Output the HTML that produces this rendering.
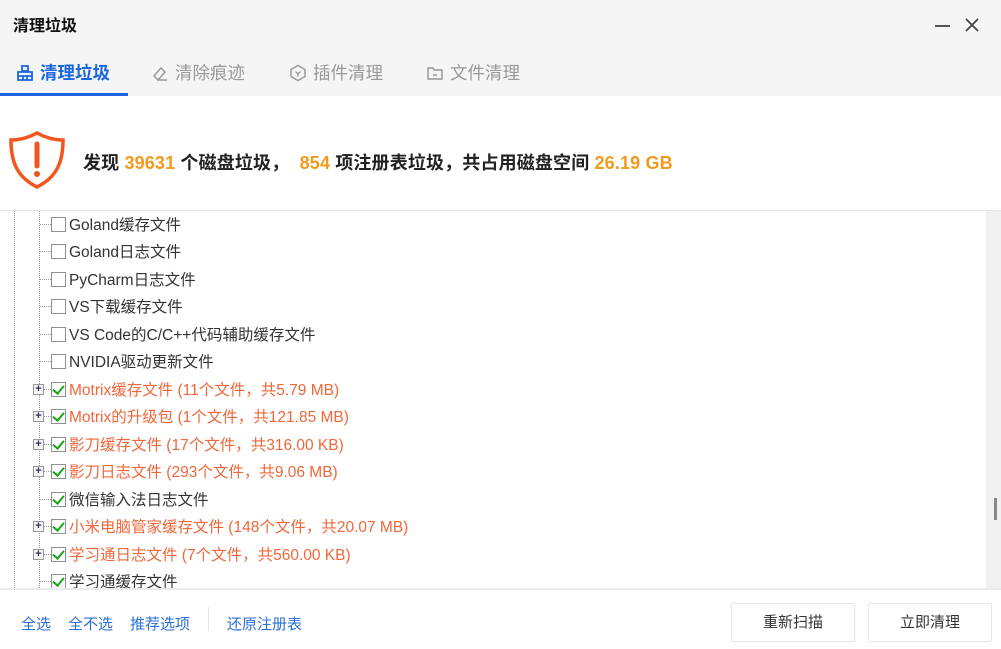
<!DOCTYPE html>
<html><head><meta charset="utf-8"><style>
*{margin:0;padding:0;box-sizing:border-box}
body{width:1001px;height:649px;overflow:hidden;background:#fff;font-family:"Liberation Sans","Noto Sans CJK SC",sans-serif;position:relative}
.top{position:absolute;left:0;top:0;width:1001px;height:96px;background:#f5f5f5}
.title{position:absolute;left:13px;top:12px;font-size:16px;font-weight:bold;color:#111}
.tab{position:absolute;top:60px;font-size:17.5px;color:#999;display:flex;align-items:center;gap:6px}
.tab.act{color:#1a66e0;font-weight:bold}
.ul{position:absolute;left:0;top:93px;width:128px;height:3px;background:#1a66e0}
.hdr{position:absolute;left:83px;top:149px;font-size:18px;letter-spacing:0.15px;font-weight:bold;color:#222;white-space:nowrap}
.hdr b{color:#f39a1d}
.sep{position:absolute;left:0;top:210px;width:1001px;height:1px;background:#e3e6ea}
.list{position:absolute;left:0;top:211px;width:986px;height:377px;overflow:hidden}
.sb{position:absolute;left:986px;top:211px;width:15px;height:377px;background:#f0f0f0}
.thumb{position:absolute;left:994px;top:498px;width:3px;height:22px;background:#888}
.vl{position:absolute;top:0;height:377px;border-left:1px dotted #999}
.row{position:absolute;left:0;height:22px;font-size:15.5px;color:#333;white-space:nowrap}
.row .h{position:absolute;left:40px;top:11px;width:11px;border-top:1px dotted #999}
.cb{position:absolute;left:51px;top:4px;width:15px;height:15px;border:1px solid #8e8f8f;background:#fff}
.cb.c::after{content:"";position:absolute;left:3px;top:0px;width:5px;height:9px;border:solid #1aa51a;border-width:0 2px 2px 0;transform:rotate(40deg)}
.pl{position:absolute;left:33px;top:6px;width:11px;height:11px;border:1px solid #999;background:#f4f4f4;font-size:11px;line-height:9px;text-align:center;color:#335;font-weight:bold}
.row .t{position:absolute;left:69px;top:0px}
.row.o{color:#f0673a}
.foot{position:absolute;left:0;top:588px;width:1001px;height:2px;background:#e8ebef}
.lk{position:absolute;top:613px;font-size:15px;color:#2a6fd6}
.btn{position:absolute;top:603px;width:124px;height:39px;border:1px solid #e4e6ea;border-radius:2px;font-size:15px;color:#333;text-align:center;line-height:37px;background:#fff}
</style></head><body>
<div class="top">
<div class="title">清理垃圾</div>
<div style="position:absolute;left:935px;top:25px;width:15px;height:2px;background:#555"></div>
<svg style="position:absolute;left:965px;top:18px" width="14" height="14"><path d="M1 1L13 13M13 1L1 13" stroke="#444" stroke-width="1.8"/></svg>
<div class="tab act" style="left:16px"><svg width="18" height="18" viewBox="0 0 18 18"><path d="M6 2h6v5H6zM2 8h14v8H2zM2 12h14M7 12v4M11 12v4" fill="none" stroke="#1a66e0" stroke-width="1.8"/></svg>清理垃圾</div>
<div class="tab" style="left:151px"><svg width="18" height="18" viewBox="0 0 18 18"><path d="M3 12l7-8 4 4-7 8zM6 16h10" fill="none" stroke="#999" stroke-width="1.5"/></svg>清除痕迹</div>
<div class="tab" style="left:289px"><svg width="18" height="18" viewBox="0 0 18 18"><path d="M9 1.5l7 4v7l-7 4-7-4v-7z" fill="none" stroke="#999" stroke-width="1.5"/><path d="M6.5 7.5L9 10l2.5-2.5M9 10v3" fill="none" stroke="#999" stroke-width="1.3"/></svg>插件清理</div>
<div class="tab" style="left:426px"><svg width="18" height="18" viewBox="0 0 18 18"><path d="M2 4h5l1.5 2H16v9H2z" fill="none" stroke="#999" stroke-width="1.5"/><path d="M7 11h4" stroke="#999" stroke-width="1.5"/></svg>文件清理</div>
<div class="ul"></div>
</div>
<svg style="position:absolute;left:8px;top:130px" width="58" height="60" viewBox="0 0 58 60"><path d="M29 3C20 8 12 10 3 10c0 22 6 37 26 47 20-10 26-25 26-47-9 0-17-2-26-7z" fill="none" stroke="#f2561d" stroke-width="3.5"/><path d="M29 14v22" stroke="#f2561d" stroke-width="5" stroke-linecap="round"/><circle cx="29" cy="44" r="3" fill="#f2561d"/></svg>
<div class="hdr">发现 <b>39631</b> 个磁盘垃圾， &nbsp;<b>854</b> 项注册表垃圾，共占用磁盘空间 <b>26.19 GB</b></div>
<div class="sep"></div>
<div class="list">
<div class="vl" style="left:14px"></div>
<div class="vl" style="left:39px"></div>
<div class="row" style="top:2px"><div class="h"></div><div class="cb"></div><div class="t">Goland缓存文件</div></div>
<div class="row" style="top:29px"><div class="h"></div><div class="cb"></div><div class="t">Goland日志文件</div></div>
<div class="row" style="top:57px"><div class="h"></div><div class="cb"></div><div class="t">PyCharm日志文件</div></div>
<div class="row" style="top:84px"><div class="h"></div><div class="cb"></div><div class="t">VS下载缓存文件</div></div>
<div class="row" style="top:112px"><div class="h"></div><div class="cb"></div><div class="t">VS Code的C/C++代码辅助缓存文件</div></div>
<div class="row" style="top:139px"><div class="h"></div><div class="cb"></div><div class="t">NVIDIA驱动更新文件</div></div>
<div class="row o" style="top:167px"><div class="h"></div><div class="pl">+</div><div class="cb c"></div><div class="t">Motrix缓存文件 (11个文件，共5.79 MB)</div></div>
<div class="row o" style="top:194px"><div class="h"></div><div class="pl">+</div><div class="cb c"></div><div class="t">Motrix的升级包 (1个文件，共121.85 MB)</div></div>
<div class="row o" style="top:222px"><div class="h"></div><div class="pl">+</div><div class="cb c"></div><div class="t">影刀缓存文件 (17个文件，共316.00 KB)</div></div>
<div class="row o" style="top:249px"><div class="h"></div><div class="pl">+</div><div class="cb c"></div><div class="t">影刀日志文件 (293个文件，共9.06 MB)</div></div>
<div class="row" style="top:277px"><div class="h"></div><div class="cb c"></div><div class="t">微信输入法日志文件</div></div>
<div class="row o" style="top:304px"><div class="h"></div><div class="pl">+</div><div class="cb c"></div><div class="t">小米电脑管家缓存文件 (148个文件，共20.07 MB)</div></div>
<div class="row o" style="top:332px"><div class="h"></div><div class="pl">+</div><div class="cb c"></div><div class="t">学习通日志文件 (7个文件，共560.00 KB)</div></div>
<div class="row" style="top:359px"><div class="h"></div><div class="cb c"></div><div class="t">学习通缓存文件</div></div>
</div>
<div class="sb"></div><div class="thumb"></div>
<div class="foot"></div>
<div class="lk" style="left:21px">全选</div>
<div class="lk" style="left:68px">全不选</div>
<div class="lk" style="left:130px">推荐选项</div>
<div style="position:absolute;left:208px;top:607px;width:1px;height:24px;background:#dde6f2"></div>
<div class="lk" style="left:227px">还原注册表</div>
<div class="btn" style="left:731px">重新扫描</div>
<div class="btn" style="left:868px">立即清理</div>
</body></html>
